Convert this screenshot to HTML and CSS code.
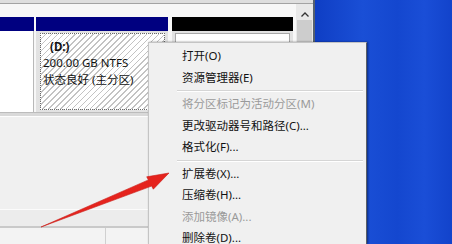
FILE: index.html
```html
<!DOCTYPE html>
<html lang="zh-CN">

<head>
    <meta charset="UTF-8">
    <meta name="viewport" content="width=device-width, initial-scale=1.0">
    <title>磁盘管理</title>
    <link rel="stylesheet" href="styles.css">
</head>

<body>
    <div id="window">
        <div class="topStrip"></div>
        <div class="content">
            <div class="main">
                <div class="band"></div>
                <div class="disks">
                    <div class="part p1">
                        <div class="head"></div>
                        <div class="body"></div>
                    </div>
                    <div class="part p2">
                        <div class="head"></div>
                        <div class="body">
                            <div class="hatch">
                                <div class="line name">(D:)</div>
                                <div class="line">200.00 GB NTFS</div>
                                <div class="line">状态良好 (主分区)</div>
                            </div>
                        </div>
                    </div>
                    <div class="part p3">
                        <div class="head"></div>
                        <div class="body">
                            <div class="inner"></div>
                        </div>
                    </div>
                </div>
                <div class="lower">
                    <div class="split"></div>
                    <div class="panel"></div>
                    <div class="band2"></div>
                    <div class="cells">
                        <div class="cell1"></div>
                        <div class="cell2"></div>
                    </div>
                </div>
            </div>
            <div class="vscroll">
                <div class="up">
                    <svg width="8" height="5" viewBox="0 0 8 5">
                        <path d="M0.5 4.5 L4 1 L7.5 4.5" fill="none" stroke="#333" stroke-width="1.3" />
                    </svg>
                </div>
                <div class="thumb"></div>
            </div>
        </div>
    </div>
    <div id="desktop"></div>

    <div id="menu">
        <div class="item">打开(O)</div>
        <div class="item">资源管理器(E)</div>
        <div class="sep"></div>
        <div class="item disabled">将分区标记为活动分区(M)</div>
        <div class="item">更改驱动器号和路径(C)...</div>
        <div class="item">格式化(F)...</div>
        <div class="sep"></div>
        <div class="item">扩展卷(X)...</div>
        <div class="item">压缩卷(H)...</div>
        <div class="item disabled">添加镜像(A)...</div>
        <div class="item">删除卷(D)...</div>
    </div>

    <svg id="arrow" width="452" height="244" viewBox="0 0 452 244">
        <polygon points="41,227 148.4,179.9 146.7,176.8 169,173 153.3,189.2 151.6,186.1" fill="#e5231d" stroke="#c91d18" stroke-width="0.6" stroke-linejoin="round" />
    </svg>
</body>

</html>
```

FILE: styles.css
```css
body {
    margin: 0;
    width: 452px;
    height: 244px;
    overflow: hidden;
    display: flex;
    position: relative;
    font-family: "Noto Sans", "Noto Sans CJK SC", sans-serif;
    font-size: 11.5px;
}

#window {
    width: 313px;
    border-right: 2px solid #55606e;
    background: #f0f0f0;
    display: flex;
    flex-direction: column;
}

.topStrip {
    height: 3px;
    background: #dedede;
    border-bottom: 1px solid #a3a3a3;
}

.content {
    flex: 1;
    display: flex;
}

.main {
    flex: 1;
    display: flex;
    flex-direction: column;
}

.band {
    height: 13px;
    background: #f7f7f7;
}

/* disk row */
.disks {
    height: 95px;
    display: flex;
    gap: 2px;
    background: #f7f7f7;
    border-bottom: 1px solid #bcbcbc;
}

.part {
    display: flex;
    flex-direction: column;
}

.part .head {
    height: 14px;
    background: #000080;
}

.p1 {
    width: 34px;
}

.p1 .body {
    flex: 1;
    background: #fff;
    border-right: 1px solid #b8b8b8;
}

.p2 {
    width: 132px;
}

.p2 .body {
    flex: 1;
    display: flex;
    padding: 2px 3px 2px 4px;
    background: #e2e2e2;
}

.hatch {
    flex: 1;
    border: 1px dotted #6a6a6a;
    background: repeating-linear-gradient(135deg, #ffffff 0 3px, #c3c3c3 3px 4.2px);
    padding: 5px 2px;
    color: #111;
}

.hatch .line {
    line-height: 16.3px;
    white-space: nowrap;
}

.hatch .name {
    margin-left: 7px;
    font-weight: bold;
}

.p3 {
    width: 121px;
    margin-left: 2px;
}

.p3 .head {
    background: #000;
}

.p3 .body {
    flex: 1;
    display: flex;
    padding: 2px 3px;
    background: #e2e2e2;
}

.p3 .inner {
    flex: 1;
    background: #fff;
    border: 1px solid #a8a8a8;
}

/* lower panels */
.lower {
    flex: 1;
    display: flex;
    flex-direction: column;
}

.split {
    height: 3px;
    background: #d9d9d9;
    border-bottom: 1px solid #fdfdfd;
}

.panel {
    height: 92px;
    background: #f0f0f0;
    border-bottom: 1px solid #fbfbfb;
}

.band2 {
    height: 16px;
    background: #ececec;
    border-bottom: 2px solid #c9c9c9;
}

.cells {
    flex: 1;
    display: flex;
}

.cell1 {
    width: 105px;
    background: #f3f3f3;
    border-right: 1px solid #d0d0d0;
}

.cell2 {
    flex: 1;
    background: #f3f3f3;
}

/* scrollbar */
.vscroll {
    width: 17px;
    background: #e8e8e8;
    display: flex;
    flex-direction: column;
}

.vscroll .up {
    height: 16px;
    display: flex;
    align-items: flex-end;
    justify-content: center;
    padding-bottom: 3px;
    box-sizing: border-box;
}

.vscroll .thumb {
    height: 70px;
    margin: 0 1px;
    background: #cdcdcd;
}

#desktop {
    flex: 1;
    background: linear-gradient(90deg, #0f3ec4 0%, #1a4fd6 35%, #1447cf 60%, #1a4ed7 80%, #1243cb 100%);
}

/* context menu, cut off by the bottom of the shot */
#menu {
    position: absolute;
    left: 148px;
    top: 42px;
    width: 217px;
    height: 199px;
    overflow: hidden;
    padding-top: 2px;
    background: #f0f0f0;
    border: 1px solid #c4c4c4;
    border-bottom: none;
    border-right-color: #5b5f66;
    box-shadow: 1px 0 2px rgba(0, 0, 0, 0.45);
    font-family: "Noto Sans", "Noto Sans CJK SC", sans-serif;
}

#menu .item {
    height: 21.5px;
    line-height: 21.5px;
    padding-left: 33px;
    color: #111;
    white-space: nowrap;
}

#menu .item.disabled {
    color: #9a9a9a;
}

#menu .sep {
    height: 0;
    margin: 2px 3px 1px 28px;
    border-top: 1px solid #d5d5d5;
    border-bottom: 1px solid #ffffff;
}

#arrow {
    position: absolute;
    left: 0;
    top: 0;
}
```
